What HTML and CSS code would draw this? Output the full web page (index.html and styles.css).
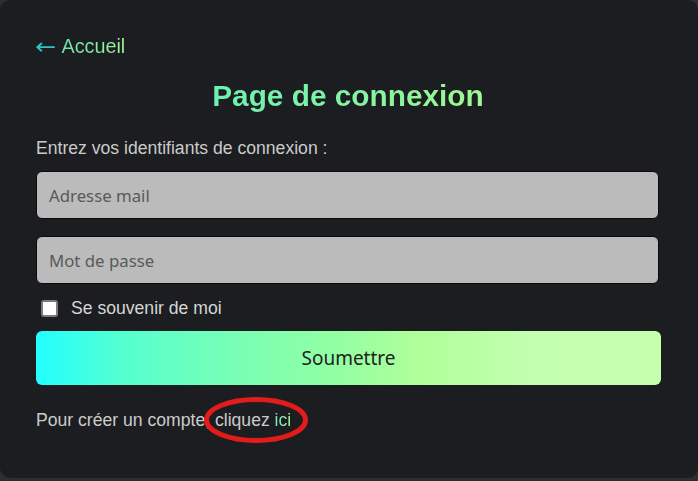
FILE: index.html
```html
<!DOCTYPE html>
<html lang="fr">
<head>
<meta charset="utf-8">
<title>Page de connexion</title>
<link rel="stylesheet" href="styles.css">
</head>
<body>
<main class="card">
  <a class="back" href="#"><span class="arrow">←</span><span class="back-text">Accueil</span></a>
  <h1 class="title">Page de connexion</h1>
  <p class="intro">Entrez vos identifiants de connexion :</p>
  <form class="form">
    <input class="field" type="email" placeholder="Adresse mail">
    <input class="field field-second" type="password" placeholder="Mot de passe">
    <label class="remember"><input class="check" type="checkbox"><span>Se souvenir de moi</span></label>
    <button class="submit" type="button">Soumettre</button>
  </form>
  <p class="footer">Pour créer un compte, <span class="mark">cliquez <a class="link" href="#">ici</a><svg class="ellipse" width="110" height="50" viewBox="0 0 110 50"><ellipse cx="55" cy="25" rx="49.5" ry="20.5" fill="none" stroke="#e21b1b" stroke-width="5"/></svg></span></p>
</main>
</body>
</html>
```

FILE: styles.css
```css
html, body {
  margin: 0;
  padding: 0;
}
body {
  background: #2e2e31;
  font-family: "Liberation Sans", Arial, sans-serif;
}
.card {
  box-sizing: border-box;
  width: 698px;
  height: 478px;
  background: #1c1d21;
  border-radius: 10px;
  padding: 35px 37px 0 35px;
  display: flex;
  flex-direction: column;
  align-items: stretch;
}
.back {
  align-self: flex-start;
  display: flex;
  align-items: center;
  height: 23px;
  font-size: 19.8px;
  line-height: 23px;
  text-decoration: none;
}
.arrow {
  display: block;
  font-family: "DejaVu Sans", sans-serif;
  font-size: 22px;
  line-height: 23px;
  transform: scaleX(1.15);
  transform-origin: left center;
  color: #2bc6c8;
  margin-right: 8px;
}
.back-text {
  background: linear-gradient(90deg, #6ae6ae 0%, #84f0a4 60%, #a6f29a 100%);
  -webkit-background-clip: text;
  background-clip: text;
  color: transparent;
}
.title {
  margin: 21px 0 0;
  align-self: center;
  font-size: 29.8px;
  line-height: 34px;
  font-weight: bold;
  background: linear-gradient(90deg, #6cf0b2 0%, #84f4a2 55%, #a0f890 100%);
  -webkit-background-clip: text;
  background-clip: text;
  color: transparent;
}
.intro {
  margin: 25px 0 0 1px;
  font-size: 17.6px;
  line-height: 20px;
  color: #cbcbcb;
}
.form {
  display: flex;
  flex-direction: column;
  margin: 12.5px 0 0 1px;
}
.field {
  box-sizing: border-box;
  height: 48px;
  margin-right: 2px;
  background: #bbbbbb;
  border: 1px solid #0a0a0a;
  border-radius: 6px;
  padding: 2px 12px 0;
  font-family: "Noto Sans", sans-serif;
  font-size: 16.8px;
  color: #333;
  outline: none;
}
.field::placeholder {
  color: #595959;
}
.field-second {
  margin-top: 17px;
}
.remember {
  display: flex;
  align-items: center;
  margin-top: 15.5px;
  height: 18px;
  font-size: 17.6px;
  color: #d6d6d6;
}
.check {
  appearance: none;
  -webkit-appearance: none;
  box-sizing: border-box;
  width: 17px;
  height: 17px;
  margin: 0 13px 0 5px;
  background: #ffffff;
  border: 2px solid #7b7b82;
  border-radius: 3px;
}
.submit {
  margin-top: 14px;
  height: 54px;
  border: none;
  border-radius: 6px;
  background: linear-gradient(90deg, #22ffff 0%, #55ffd0 14%, #78ffb4 32%, #92ffa2 48%, #b1ff9a 62%, #c3ffb0 80%, #c6ffae 100%);
  font-family: "Noto Sans", sans-serif;
  font-size: 19px;
  color: #222222;
  padding: 0;
}
.footer {
  margin: 24.5px 0 0 1px;
  font-size: 17.6px;
  line-height: 20px;
  color: #cbcbcb;
}
.mark {
  position: relative;
}
.link {
  text-decoration: none;
  background: linear-gradient(90deg, #6cf0b8 0%, #a8f6a0 100%);
  -webkit-background-clip: text;
  background-clip: text;
  color: transparent;
}
.ellipse {
  position: absolute;
  left: -14px;
  top: -15px;
  pointer-events: none;
}
```
